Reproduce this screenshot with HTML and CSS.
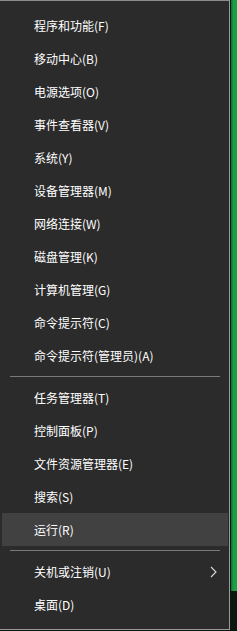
FILE: index.html
```html
<!DOCTYPE html>
<html lang="zh-CN">
<head>
    <meta charset="UTF-8">
    <title>Win+X 菜单</title>
    <link rel="stylesheet" href="styles.css">
</head>
<body>
    <div class="screen">
        <ul class="menu">
            <li class="item">程序和功能(F)</li>
            <li class="item">移动中心(B)</li>
            <li class="item">电源选项(O)</li>
            <li class="item">事件查看器(V)</li>
            <li class="item">系统(Y)</li>
            <li class="item">设备管理器(M)</li>
            <li class="item">网络连接(W)</li>
            <li class="item">磁盘管理(K)</li>
            <li class="item">计算机管理(G)</li>
            <li class="item">命令提示符(C)</li>
            <li class="item">命令提示符(管理员)(A)</li>
            <li class="sep"></li>
            <li class="item">任务管理器(T)</li>
            <li class="item">控制面板(P)</li>
            <li class="item">文件资源管理器(E)</li>
            <li class="item">搜索(S)</li>
            <li class="item active">运行(R)</li>
            <li class="sep"></li>
            <li class="item has-sub">关机或注销(U)
                <svg class="chevron" width="7" height="12" viewBox="0 0 7 12">
                    <path d="M1 1 L6 6 L1 11" fill="none" stroke="#d8d8d8" stroke-width="1.1"/>
                </svg>
            </li>
            <li class="item">桌面(D)</li>
        </ul>
        <div class="strip"></div>
    </div>
</body>
</html>
```

FILE: styles.css
```css
* {
    margin: 0;
    padding: 0;
    box-sizing: border-box;
}

body {
    width: 237px;
    height: 631px;
    overflow: hidden;
    background: #0b1710;
    font-family: 'Noto Sans CJK SC', 'Noto Sans', sans-serif;
}

.screen {
    display: flex;
    align-items: flex-start;
}

.menu {
    list-style: none;
    width: 231px;
    height: 630px;
    padding: 8px 0 8px 0;
    background: #2b2b2b;
    border-top: 1px solid #8c8c8c;
    border-right: 1px solid #9a9a9a;
    border-bottom: 1px solid #9a9a9a;
}

.item {
    position: relative;
    height: 33px;
    margin-left: 2px;
    margin-right: 1px;
    padding-left: 32px;
    display: flex;
    align-items: center;
    font-size: 12px;
    color: #fff;
}

.item.active {
    background: #414141;
}

.sep {
    height: 9px;
    display: flex;
    align-items: center;
    padding: 0 9px 0 10px;
}

.sep::before {
    content: '';
    display: block;
    width: 100%;
    height: 1px;
    background: #7a7a7a;
}

.chevron {
    position: absolute;
    right: 11px;
    top: 11px;
}

.strip {
    width: 6px;
    height: 591px;
    margin-left: 1px;
    background: linear-gradient(to right, #0f6a2e, #18a046 40%, #18a046);
}
```
